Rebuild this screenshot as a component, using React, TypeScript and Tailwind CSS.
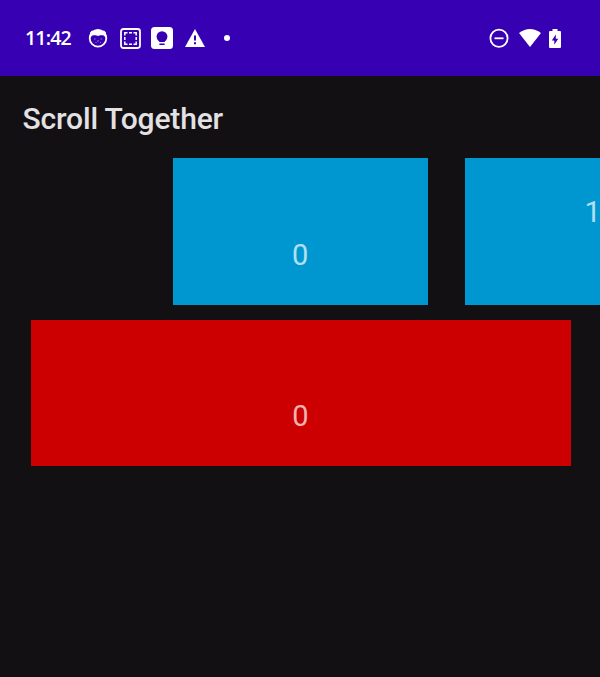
import React from "react";

function StatusBar() {
  return (
    <header className="flex h-[76px] items-center bg-[#3700b3] pl-[25px] pr-[39px] text-white">
      <time className="w-[63px] whitespace-nowrap font-['Open_Sans',sans-serif] text-[19.5px] font-semibold leading-[26px] tracking-[-0.8px]">11:42</time>
      <svg className="h-5 w-5" viewBox="0 0 20 20" fill="none">
        <circle cx="10" cy="10.300" r="8.300" stroke="white" strokeWidth="1.800" />
        <path d="M2 9.500V4.500L4 2.500 6 3Q10 .6 14 3l2-.5 2 2v5L15.200 7.200H12.200L10 8 7.800 7.200H4.800Z" fill="white" />
        <path d="M6 11h1.500M12.500 11H14M9 13h2M7.500 14.500h1M12 14.500h1" stroke="white" strokeWidth="1" opacity=".45" />
      </svg>
      <svg className="ml-[12px] h-[21px] w-[21px]" viewBox="0 0 21 21" fill="none" stroke="white">
        <rect x="1" y="1" width="19" height="19" rx="2.400" strokeWidth="1.800" />
        <path d="M4.800 7.500V4.800h2.700M9 4.800h3M13.500 4.800h2.700v2.700M16.200 9v3M16.200 13.500v2.700h-2.700M12 16.200H9M7.500 16.200H4.800v-2.700M4.800 12V9" strokeWidth="1.500" />
      </svg>
      <svg className="ml-[10px] h-[22px] w-[22px]" viewBox="0 0 22 22">
        <rect width="22" height="22" rx="3.500" fill="white" />
        <circle cx="11" cy="9.600" r="5.400" fill="#3700b3" />
        <path d="M8.200 13h5.600v2H8.200ZM8.400 16.500h5.200v1.500H8.400Z" fill="#3700b3" />
      </svg>
      <svg className="ml-[12px] h-[18px] w-[20px]" viewBox="0 0 20 18">
        <path d="M10 0 20 18H0Z" fill="white" />
        <path d="M9 6.500h2v5H9ZM9 13.200h2v2H9Z" fill="#3700b3" />
      </svg>
      <span className="ml-[19px] h-[6px] w-[6px] rounded-full bg-white" />
      <svg className="ml-auto h-5 w-5" viewBox="0 0 20 20" fill="none" stroke="white" strokeWidth="1.800">
        <circle cx="10" cy="10.300" r="8.600" />
        <path d="M5.500 10.300h9" />
      </svg>
      <svg className="ml-[10px] h-[18px] w-[22px]" viewBox="0 0 22 18">
        <path d="M0 4.100Q11-4.100 22 4.100L11 18Z" fill="white" />
      </svg>
      <svg className="ml-[8px] h-[19px] w-[12px]" viewBox="0 0 12 19">
        <path d="M3.500 0h5v2H11q1 0 1 1v15q0 1-1 1H1q-1 0-1-1V3q0-1 1-1h2.500Z" fill="white" />
        <path d="M6.800 5.500 2.800 11.400h2.500v4.300L9.200 9.800H6.800Z" fill="#3700b3" />
      </svg>
    </header>
  );
}

export default function App() {
  return (
    <div className="h-[677px] w-[600px] overflow-hidden bg-[#121013] font-[Roboto,sans-serif]">
      <StatusBar />
      <h1 className="h-[82px] pl-[22.500px] pt-[23px] text-[30px] font-medium leading-[40px] tracking-[-0.15px] text-[#e4e1e4]">Scroll Together</h1>
      <main>
        <section className="flex h-[147px] gap-[37px] overflow-hidden pl-[172.500px] text-[29px] leading-[36px] text-[#b3e0f1]">
          <div className="w-[255.500px] shrink-0 bg-[#0097d0] pt-[79px] text-center">0</div>
          <div className="w-[255.500px] shrink-0 bg-[#0097d0] pt-[36px] text-center">1</div>
        </section>
        <section className="ml-[31px] mt-[14.500px] h-[146.500px] w-[540px] bg-[#cc0000] pr-px pt-[78px] text-center text-[29px] leading-[36px] text-[#f0b3b3]">0</section>
      </main>
    </div>
  );
}
